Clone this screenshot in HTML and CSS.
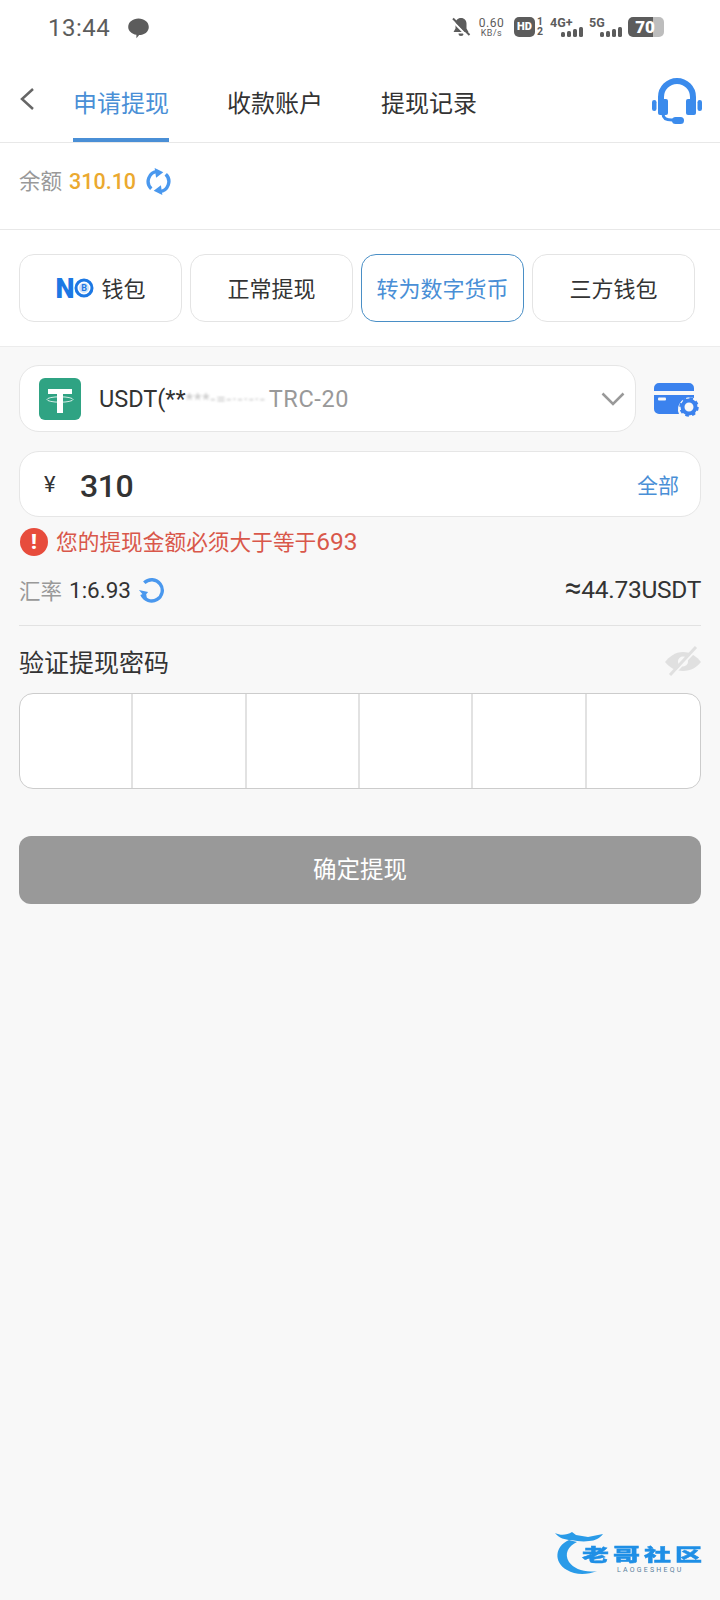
FILE: index.html
```html
<!DOCTYPE html>
<html lang="zh-CN">
<head>
    <meta charset="UTF-8">
    <meta name="viewport" content="width=device-width, initial-scale=1.0">
    <title>申请提现</title>
    <link rel="stylesheet" href="styles.css">
</head>
<body>
<div class="page">
    <div class="status-bar">
        <div class="status-left">
            <span class="status-time">13:44</span>
            <svg class="status-chat" viewBox="0 0 20 20"><path d="M10 0.500c5.400 0 9.800 3.400 9.800 8s-4.400 7.800-9.200 7.800l-2.600 3v-3.300c-4.500-.8-7.800-3.700-7.800-7.500 0-4.600 4.400-8 9.800-8z"/></svg>
        </div>
        <div class="status-right">
            <svg class="status-bell" viewBox="0 0 20 20"><path d="M10 1c-3.500 0-5.500 2.500-5.500 5.500v5L2.500 15h15l-2-3.500v-5C15.500 3.500 13.500 1 10 1z"/><path d="M7.500 16.500a2.500 2.500 0 0 0 5 0z"/><path class="bell-gap" d="M1 3.500L17 20"/><path class="bell-slash" d="M2 1.500L18.500 18"/></svg>
            <div class="status-speed"><span>0.60</span><span class="speed-unit">KB/s</span></div>
            <div class="status-hd"><span class="hd-box">HD</span><span class="hd-nums"><span>1</span><span>2</span></span></div>
            <div class="signal"><span class="signal-name">4G+</span><span class="signal-bars"><i class="b1"></i><i class="b2"></i><i class="b3"></i><i class="b4"></i></span></div>
            <div class="signal"><span class="signal-name">5G</span><span class="signal-bars"><i class="b1"></i><i class="b2"></i><i class="b3"></i><i class="b4"></i></span></div>
            <div class="battery"><span class="battery-level">70</span></div>
        </div>
    </div>

    <div class="nav">
        <svg class="back" viewBox="0 0 16 24"><path d="M14 2L3 12l11 10"/></svg>
        <div class="tabs">
            <div class="tab active">申请提现</div>
            <div class="tab">收款账户</div>
            <div class="tab">提现记录</div>
        </div>
        <svg class="headset" viewBox="0 0 54 48">
            <path class="band" d="M11 24v-5a16 16 0 0 1 32 0v5"/>
            <rect x="8" y="21" width="10" height="16" rx="2"/>
            <rect x="36" y="21" width="10" height="16" rx="2"/>
            <rect x="2" y="22" width="4.500" height="11" rx="2.200"/>
            <rect x="47.500" y="22" width="4.500" height="11" rx="2.200"/>
            <path class="boom" d="M13 36c0 4 3 6 9 6h4"/>
            <rect x="22" y="39" width="12" height="7" rx="3.500"/>
        </svg>
    </div>

    <div class="balance">
        <span class="balance-label">余额</span>
        <span class="balance-value">310.10</span>
        <svg class="refresh-two" viewBox="0 0 28 28">
            <path d="M13 3.500A10.500 10.500 0 0 0 6.500 21.500" class="arc"/>
            <path d="M15 24.500A10.500 10.500 0 0 0 21.500 6.500" class="arc"/>
            <path d="M10 0l9 4.500-7.500 5.500zM18 28l-9-4.500 7.500-5.500z"/>
        </svg>
    </div>

    <div class="methods">
        <div class="method">
            <span class="no-logo">N</span>
            <svg class="coin" viewBox="0 0 20 20"><circle class="coin-ring" cx="10" cy="10" r="8"/><circle cx="10" cy="10" r="5"/><text x="10" y="13" text-anchor="middle">B</text></svg>
            <span class="method-wallet">钱包</span>
        </div>
        <div class="method">正常提现</div>
        <div class="method selected">转为数字货币</div>
        <div class="method">三方钱包</div>
    </div>

    <div class="main">
        <div class="account-row">
            <div class="account">
                <div class="tether">
                    <svg viewBox="0 0 42 42">
                        <path d="M9 11h24v5h-9v19h-6V16H9z"/>
                        <ellipse cx="21" cy="21.500" rx="13" ry="2.700"/>
                    </svg>
                </div>
                <span class="account-name">USDT(**</span><span class="account-blur">***-=-·-·-·-</span><span class="account-net">TRC-20</span>
                <svg class="chevron" viewBox="0 0 24 14"><path d="M1.500 1.500L12 12 22.500 1.500"/></svg>
            </div>
            <svg class="card-gear" viewBox="0 0 46 34">
                <path d="M5 0h30a5 5 0 0 1 5 5v3H0V5a5 5 0 0 1 5-5zM0 12h40v3a12 12 0 0 0-15 16H5a5 5 0 0 1-5-5z"/>
                <rect class="card-slot" x="4" y="14.500" width="8" height="3" rx="1"/>
                <circle class="gear" cx="35" cy="24" r="6.500"/>
                <circle class="gear-teeth" cx="35" cy="24" r="8.500"/>
            </svg>
        </div>

        <div class="amount">
            <span class="yen">¥</span>
            <span class="amount-value">310</span>
            <span class="amount-all">全部</span>
        </div>

        <div class="error">
            <span class="error-icon">!</span>
            <span class="error-text">您的提现金额必须大于等于<span class="error-num">693</span></span>
        </div>

        <div class="rate">
            <div class="rate-left">
                <span class="rate-label">汇率</span>
                <span class="rate-value">1:6.93</span>
                <svg class="refresh-one" viewBox="0 0 28 28">
                    <path d="M6.500 7A11 11 0 1 1 4 19" class="arc"/>
                    <path d="M1 14.500l9.500 2-2 2.500 1 5.500z"/>
                </svg>
            </div>
            <span class="rate-result"><span class="approx">≈</span>44.73USDT</span>
        </div>

        <div class="pwd-head">
            <span>验证提现密码</span>
            <svg class="eye" viewBox="0 0 36 30">
                <path d="M18 6c8 0 14 5 18 10-4 5-10 9-18 9S4 21 0 16c4-5 10-10 18-10z"/>
                <circle class="eye-pupil" cx="18" cy="15.500" r="5"/>
                <path class="eye-gap" d="M33 2L7 30"/>
                <path class="eye-slash" d="M31 1L5 29"/>
            </svg>
        </div>

        <div class="pwd-box">
            <div class="pwd-cell"></div>
            <div class="pwd-cell"></div>
            <div class="pwd-cell"></div>
            <div class="pwd-cell"></div>
            <div class="pwd-cell"></div>
            <div class="pwd-cell"></div>
        </div>

        <div class="submit">确定提现</div>
    </div>

    <div class="watermark">
        <svg class="dragon" viewBox="0 0 60 46">
            <path d="M14 8C0 14-2 30 12 38c8 5 20 5 30 1-12 2-23-2-28-9-5-8-1-16 8-20z"/>
            <path d="M0 1c6 3 12 2 17-1l4 3 12 2 15-3c-3 4-8 7-14 7-6 1-12 0-18-1C10 8 4 6 0 1z"/>
        </svg>
        <span class="watermark-name">老哥社区</span>
        <span class="watermark-sub">LAOGESHEQU</span>
    </div>
</div>
</body>
</html>
```

FILE: styles.css
```css
* {
    box-sizing: border-box;
}

body {
    margin: 0;
    padding: 0;
    background-color: #f8f8f8;
    font-family: Roboto, "Noto Sans CJK SC", sans-serif;
    color: #333;
}

.page {
    position: relative;
    width: 720px;
    height: 1600px;
    overflow: hidden;
}

/* status bar */
.status-bar {
    height: 60px;
    background-color: #fff;
    display: flex;
    justify-content: space-between;
    align-items: flex-start;
    padding: 14px 56px 0 48px;
    color: #5c5c5c;
}

.status-left {
    display: flex;
    align-items: center;
    gap: 18px;
}

.status-time {
    font-size: 24px;
    line-height: 28px;
    letter-spacing: 0.5px;
}

.status-chat {
    width: 21px;
    height: 21px;
    fill: #5c5c5c;
}

.status-right {
    display: flex;
    align-items: center;
    height: 26px;
}

.status-bell {
    width: 20px;
    height: 20px;
    fill: #5c5c5c;
    margin-right: 7px;
}

.bell-gap {
    stroke: #fff;
    stroke-width: 2;
    fill: none;
}

.bell-slash {
    stroke: #5c5c5c;
    stroke-width: 2;
    fill: none;
}

.status-speed {
    display: flex;
    flex-direction: column;
    align-items: center;
    width: 27px;
    font-size: 12px;
    line-height: 12px;
    letter-spacing: 0.5px;
    margin-right: 9px;
}

.speed-unit {
    font-size: 9px;
    line-height: 9px;
}

.status-hd {
    display: flex;
    align-items: center;
    gap: 2px;
    margin-right: 7px;
}

.hd-box {
    width: 21px;
    height: 20px;
    border-radius: 5px;
    background-color: #5c5c5c;
    color: #fff;
    font-size: 11px;
    font-weight: 900;
    line-height: 20px;
    text-align: center;
}

.hd-nums {
    display: flex;
    flex-direction: column;
    font-size: 10.500px;
    font-weight: 700;
    line-height: 10px;
}

.signal {
    position: relative;
    width: 33px;
    height: 20px;
    margin-right: 6px;
}

.signal-name {
    display: block;
    font-size: 12.500px;
    font-weight: 700;
    line-height: 11px;
}

.signal-bars {
    position: absolute;
    right: 0;
    bottom: 0;
    display: flex;
    align-items: flex-end;
    gap: 2px;
}

.signal-bars i {
    display: block;
    width: 4px;
    border-radius: 1.500px;
    background-color: #5c5c5c;
}

.b1 { height: 5px; }
.b2 { height: 6px; }
.b3 { height: 8px; }
.b4 { height: 10px; }

.battery {
    width: 36px;
    height: 20px;
    border-radius: 5px;
    background: linear-gradient(to right, #5c5c5c 70%, #bdbdbd 70%);
    text-align: center;
}

.battery-level {
    display: block;
    padding-right: 2px;
    color: #fff;
    font-size: 17px;
    font-weight: 900;
    line-height: 20px;
}

/* nav */
.nav {
    position: relative;
    height: 83px;
    background-color: #fff;
    border-bottom: 1px solid #e8e8e8;
    display: flex;
    padding-left: 19px;
}

.back {
    width: 16px;
    height: 24px;
    margin-top: 27px;
    fill: none;
    stroke: #666;
    stroke-width: 2.500;
}

.tabs {
    display: flex;
    gap: 58px;
    margin-left: 38px;
}

.tab {
    width: 96px;
    height: 82px;
    padding-top: 26px;
    font-size: 24px;
    line-height: 36px;
    text-align: center;
    white-space: nowrap;
    color: #333;
}

.tab.active {
    color: #4a8fd6;
    border-bottom: 4px solid #4a8fd6;
}

.headset {
    position: absolute;
    left: 650px;
    top: 18px;
    width: 54px;
    height: 48px;
    fill: #3b8bec;
}

.band {
    fill: none;
    stroke: #3b8bec;
    stroke-width: 6;
}

.boom {
    fill: none;
    stroke: #3b8bec;
    stroke-width: 3;
}

/* balance */
.balance {
    height: 87px;
    background-color: #fff;
    border-bottom: 1px solid #e8e8e8;
    display: flex;
    align-items: center;
    padding: 0 0 10px 19px;
}

.balance-label {
    font-size: 21.500px;
    color: #999;
    margin-right: 7px;
    padding-bottom: 3px;
}

.balance-value {
    font-size: 21.500px;
    font-weight: 500;
    color: #eba92f;
    margin-right: 9px;
}

.refresh-two {
    width: 27px;
    height: 27px;
    fill: #4a98ee;
}

.arc {
    fill: none;
    stroke: #4a98ee;
    stroke-width: 3.500;
}

/* withdraw methods */
.methods {
    height: 117px;
    background-color: #fff;
    border-bottom: 1px solid #ececec;
    display: grid;
    grid-template-columns: repeat(4, 1fr);
    gap: 8px;
    padding: 24px 25px 24px 19px;
}

.method {
    height: 68px;
    padding-bottom: 2px;
    border: 1px solid #e4e4e4;
    border-radius: 15px;
    background-color: #fff;
    display: flex;
    align-items: center;
    justify-content: center;
    font-size: 22px;
    color: #333;
}

.method.selected {
    border-color: #4a8fc6;
    color: #4a8fd6;
}

.no-logo {
    font-size: 27px;
    font-weight: 900;
    line-height: 27px;
    color: #1c78e4;
    padding-top: 4px;
}

.coin {
    width: 20px;
    height: 20px;
    fill: #fff;
    margin-top: 2px;
}

.coin-ring {
    fill: none;
    stroke: #1c78e4;
    stroke-width: 3;
}

.coin circle:nth-child(2) {
    fill: #cfe2f8;
}

.coin text {
    fill: #1c78e4;
    font-size: 9px;
    font-weight: 700;
}

.method-wallet {
    margin-left: 7px;
}

/* main form */
.main {
    padding: 18px 19px 0;
}

.account-row {
    display: flex;
    align-items: center;
}

.account {
    width: 617px;
    height: 67px;
    border: 1px solid #e6e6e6;
    border-radius: 20px;
    background-color: #fff;
    display: flex;
    align-items: center;
    padding-left: 19px;
    font-size: 23.500px;
    white-space: nowrap;
}

.tether {
    width: 42px;
    height: 42px;
    border-radius: 6px;
    background-color: #2fa383;
    margin-right: 18px;
}

.tether svg {
    display: block;
    width: 42px;
    height: 42px;
    fill: #fff;
}

.tether ellipse {
    fill: none;
    stroke: #fff;
    stroke-width: 0.800;
}

.account-name {
    color: #333;
}

.account-blur {
    margin-right: 3px;
    color: #c4c4c4;
    font-size: 17px;
    letter-spacing: 1px;
    filter: blur(0.8px);
}

.account-net {
    color: #999;
    letter-spacing: 0.6px;
}

.chevron {
    width: 24px;
    height: 14px;
    margin-left: auto;
    margin-right: 10px;
    fill: none;
    stroke: #999;
    stroke-width: 2.500;
}

.card-gear {
    width: 46px;
    height: 34px;
    margin-left: 18px;
    margin-top: 3px;
    fill: #3b82ee;
}

.card-slot {
    fill: #f8f8f8;
}

.gear {
    fill: none;
    stroke: #3b82ee;
    stroke-width: 4;
}

.gear-teeth {
    fill: none;
    stroke: #3b82ee;
    stroke-width: 2.500;
    stroke-dasharray: 3.500 3.200;
}

.amount {
    height: 66px;
    margin-top: 19px;
    border: 1px solid #e6e6e6;
    border-radius: 20px;
    background-color: #fff;
    display: flex;
    align-items: center;
    padding: 0 21px 0 24px;
}

.yen {
    width: 36px;
    font-size: 22px;
}

.amount-value {
    padding-top: 3px;
    font-size: 32px;
    font-weight: 500;
    letter-spacing: -0.5px;
}

.amount-all {
    margin-left: auto;
    font-size: 21px;
    color: #4a8fd6;
}

.error {
    display: flex;
    align-items: center;
    gap: 8px;
    height: 28px;
    margin-top: 11px;
    padding-left: 1px;
    color: #d9574a;
    white-space: nowrap;
}

.error-text {
    font-size: 21.700px;
    padding-bottom: 3px;
}

.error-num {
    font-size: 24.500px;
}

.error-icon {
    width: 28px;
    height: 28px;
    border-radius: 50%;
    background-color: #e74c3c;
    color: #fff;
    font-size: 21px;
    font-weight: 900;
    line-height: 28px;
    text-align: center;
}

.rate {
    display: flex;
    justify-content: space-between;
    align-items: center;
    height: 70px;
    padding-top: 3px;
    border-bottom: 1px solid #e2e2e2;
    padding-bottom: 5px;
}

.rate-left {
    display: flex;
    align-items: center;
}

.rate-label {
    font-size: 21.500px;
    color: #999;
    margin-right: 7px;
}

.rate-value {
    font-size: 22.500px;
    color: #333;
    margin-right: 7px;
}

.refresh-one {
    width: 27px;
    height: 27px;
    fill: #4a98ee;
}

.rate-result {
    font-size: 24.500px;
    line-height: 32px;
    letter-spacing: -0.3px;
}

.approx {
    font-size: 30px;
    line-height: 24px;
}

.pwd-head {
    display: flex;
    justify-content: space-between;
    align-items: center;
    height: 67px;
    padding-top: 3px;
    font-size: 25px;
}

.eye {
    width: 36px;
    height: 30px;
    fill: #e0e0e0;
}

.eye-pupil {
    fill: #f8f8f8;
}

.eye-gap {
    fill: none;
    stroke: #f8f8f8;
    stroke-width: 2;
}

.eye-slash {
    fill: none;
    stroke: #e0e0e0;
    stroke-width: 3;
}

.pwd-box {
    height: 96px;
    border: 1px solid #ccc;
    border-radius: 14px;
    background-color: #fff;
    display: grid;
    grid-template-columns: repeat(6, 1fr);
    overflow: hidden;
}

.pwd-cell {
    border-right: 2px solid #e2e2e2;
}

.pwd-cell:last-child {
    border-right: none;
}

.submit {
    height: 68px;
    margin-top: 47px;
    border-radius: 12px;
    background-color: #999;
    color: #fff;
    font-size: 23.500px;
    line-height: 68px;
    text-align: center;
}

/* watermark in the corner */
.watermark {
    position: absolute;
    left: 555px;
    top: 1532px;
    width: 150px;
    height: 46px;
    overflow: visible;
}

.dragon {
    position: absolute;
    left: 0;
    top: 0;
    width: 60px;
    height: 46px;
    fill: #2a9be8;
    overflow: visible;
}

.watermark-name {
    position: absolute;
    left: 27px;
    top: 7px;
    font-size: 27px;
    font-weight: 900;
    line-height: 32px;
    letter-spacing: 4px;
    color: #1f8fe6;
    -webkit-text-stroke: 0.6px #1f8fe6;
    white-space: nowrap;
    transform: scaleY(0.65);
}

.watermark-sub {
    position: absolute;
    left: 62px;
    top: 34px;
    font-size: 7px;
    line-height: 8px;
    letter-spacing: 2.200px;
    color: #5a7f9c;
    white-space: nowrap;
}
```
